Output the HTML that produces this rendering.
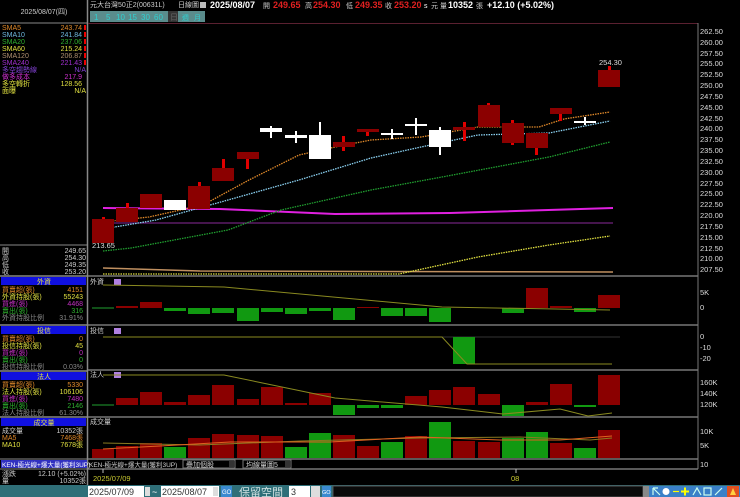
<!DOCTYPE html>
<html><head><meta charset="utf-8"><style>
html,body{margin:0;padding:0;background:#000;width:740px;height:497px;overflow:hidden}
svg{display:block}
text{font-family:"Liberation Sans","Noto Sans CJK TC",sans-serif}
.s{font-size:7px}
</style></head><body>
<svg width="740" height="497" viewBox="0 0 740 497" xmlns="http://www.w3.org/2000/svg">
<rect width="740" height="497" fill="#000"/>
<!-- left panel borders -->
<rect x="0" y="0" width="88" height="485" fill="#000"/>
<line x1="87.5" y1="0" x2="87.5" y2="485" stroke="#888" stroke-width="1.5"/>
<line x1="0" y1="23" x2="88" y2="23" stroke="#888"/>
<text x="44" y="14" class="s" fill="#ccc" text-anchor="middle">2025/08/07(四)</text>
<g class="s">
<text x="2" y="30" fill="#e0892a">SMA5</text><text x="82" y="30" fill="#e0892a" text-anchor="end">243.74</text>
<text x="2" y="37" fill="#6fb8e0">SMA10</text><text x="82" y="37" fill="#6fb8e0" text-anchor="end">241.84</text>
<text x="2" y="44" fill="#2fb02f">SMA20</text><text x="82" y="44" fill="#2fb02f" text-anchor="end">237.06</text>
<text x="2" y="51" fill="#e0e040">SMA60</text><text x="82" y="51" fill="#e0e040" text-anchor="end">215.24</text>
<text x="2" y="58" fill="#b09070">SMA120</text><text x="82" y="58" fill="#b09070" text-anchor="end">206.87</text>
<text x="2" y="65" fill="#a030d0">SMA240</text><text x="82" y="65" fill="#a030d0" text-anchor="end">221.43</text>
<text x="2" y="72" fill="#8040d0">多空趨勢線</text><text x="86" y="72" fill="#8040d0" text-anchor="end">N/A</text>
<text x="2" y="79" fill="#d030d0">做多成本</text><text x="82" y="79" fill="#d030d0" text-anchor="end">217.9</text>
<text x="2" y="86" fill="#e0e040">多空轉折</text><text x="82" y="86" fill="#e0e040" text-anchor="end">128.56</text>
<text x="2" y="93" fill="#e0e040">面曝</text><text x="86" y="93" fill="#e0e040" text-anchor="end">N/A</text>
</g>
<g fill="#e00">
<rect x="84" y="25" width="2" height="5"/><rect x="84" y="32" width="2" height="5"/><rect x="84" y="39" width="2" height="5"/><rect x="84" y="46" width="2" height="5"/><rect x="84" y="53" width="2" height="5"/><rect x="84" y="60" width="2" height="5"/>
</g>
<line x1="0" y1="245" x2="88" y2="245" stroke="#888"/>
<g class="s" fill="#ccc">
<text x="2" y="253">開</text><text x="86" y="253" text-anchor="end">249.65</text>
<text x="2" y="260">高</text><text x="86" y="260" text-anchor="end">254.30</text>
<text x="2" y="267">低</text><text x="86" y="267" text-anchor="end">249.35</text>
<text x="2" y="274">收</text><text x="86" y="274" text-anchor="end">253.20</text>
</g>
<!-- sections -->
<g class="s">
<line x1="0" y1="276" x2="88" y2="276" stroke="#888" stroke-width="1.5"/>
<rect x="1" y="277" width="85" height="8" fill="#1010e0"/><text x="44" y="284" fill="#e0e040" text-anchor="middle">外資</text>
<text x="2" y="292" fill="#e0892a">買賣超(張)</text><text x="83" y="292" fill="#e0892a" text-anchor="end">4151</text>
<text x="2" y="299" fill="#e0e040">外資持股(張)</text><text x="83" y="299" fill="#e0e040" text-anchor="end">55243</text>
<text x="2" y="306" fill="#c030c0">買進(張)</text><text x="83" y="306" fill="#c030c0" text-anchor="end">4468</text>
<text x="2" y="313" fill="#2fb02f">賣出(張)</text><text x="83" y="313" fill="#2fb02f" text-anchor="end">316</text>
<text x="2" y="320" fill="#888">外資持股比例</text><text x="83" y="320" fill="#888" text-anchor="end">31.91%</text>
<line x1="0" y1="325" x2="88" y2="325" stroke="#888" stroke-width="1.5"/>
<rect x="1" y="326" width="85" height="8" fill="#1010e0"/><text x="44" y="333" fill="#e0e040" text-anchor="middle">投信</text>
<text x="2" y="341" fill="#e0892a">買賣超(張)</text><text x="83" y="341" fill="#e0892a" text-anchor="end">0</text>
<text x="2" y="348" fill="#e0e040">投信持股(張)</text><text x="83" y="348" fill="#e0e040" text-anchor="end">45</text>
<text x="2" y="355" fill="#c030c0">買進(張)</text><text x="83" y="355" fill="#c030c0" text-anchor="end">0</text>
<text x="2" y="362" fill="#2fb02f">賣出(張)</text><text x="83" y="362" fill="#2fb02f" text-anchor="end">0</text>
<text x="2" y="369" fill="#888">投信持股比例</text><text x="83" y="369" fill="#888" text-anchor="end">0.03%</text>
<line x1="0" y1="371" x2="88" y2="371" stroke="#888" stroke-width="1.5"/>
<rect x="1" y="372" width="85" height="8" fill="#1010e0"/><text x="44" y="379" fill="#e0e040" text-anchor="middle">法人</text>
<text x="2" y="387" fill="#e0892a">買賣超(張)</text><text x="83" y="387" fill="#e0892a" text-anchor="end">5330</text>
<text x="2" y="394" fill="#e0e040">法人持股(張)</text><text x="83" y="394" fill="#e0e040" text-anchor="end">106106</text>
<text x="2" y="401" fill="#c030c0">買進(張)</text><text x="83" y="401" fill="#c030c0" text-anchor="end">7480</text>
<text x="2" y="408" fill="#2fb02f">賣出(張)</text><text x="83" y="408" fill="#2fb02f" text-anchor="end">2146</text>
<text x="2" y="415" fill="#888">法人持股比例</text><text x="83" y="415" fill="#888" text-anchor="end">61.30%</text>
<line x1="0" y1="417" x2="88" y2="417" stroke="#888" stroke-width="1.5"/>
<rect x="1" y="418" width="85" height="8" fill="#1010e0"/><text x="44" y="425" fill="#e0e040" text-anchor="middle">成交量</text>
<text x="2" y="433" fill="#ccc">成交量</text><text x="83" y="433" fill="#ccc" text-anchor="end">10352張</text>
<text x="2" y="440" fill="#e0892a">MA5</text><text x="83" y="440" fill="#e0892a" text-anchor="end">7468張</text>
<text x="2" y="447" fill="#e0e040">MA10</text><text x="83" y="447" fill="#e0e040" text-anchor="end">7678張</text>
<line x1="0" y1="459" x2="88" y2="459" stroke="#888"/>
<rect x="1" y="460" width="86" height="8" fill="#3030c0"/><text x="2" y="467" fill="#fff" font-size="6.5">KEN-極光線+爆大量(獲利3UP)</text>
<line x1="0" y1="469" x2="88" y2="469" stroke="#888"/>
<text x="2" y="476" fill="#ccc">漲跌</text><text x="86" y="476" fill="#ccc" text-anchor="end">12.10 (+5.02%)</text>
<text x="2" y="483" fill="#ccc">量</text><text x="86" y="483" fill="#ccc" text-anchor="end">10352張</text>
</g>
<!-- header -->
<g class="s">
<text x="90" y="7" fill="#ccc">元大台灣50正2(00631L)</text>
<text x="178" y="7" fill="#ccc">日線圖</text>
<rect x="200" y="2" width="6" height="6" fill="#bbb"/>
</g>
<text x="210" y="8" font-size="9" font-weight="bold" fill="#fff">2025/08/07</text>
<text x="263" y="8" font-size="7" fill="#ccc">開</text><text x="273" y="8" font-size="9" font-weight="bold" fill="#e02020">249.65</text>
<text x="305" y="8" font-size="7" fill="#ccc">高</text><text x="313" y="8" font-size="9" font-weight="bold" fill="#e02020">254.30</text>
<text x="346" y="8" font-size="7" fill="#ccc">低</text><text x="355" y="8" font-size="9" font-weight="bold" fill="#e02020">249.35</text>
<text x="385" y="8" font-size="7" fill="#ccc">收</text><text x="394" y="8" font-size="9" font-weight="bold" fill="#e02020">253.20</text>
<text x="424" y="8" font-size="7" fill="#fff">s</text><text x="431" y="8" font-size="7" fill="#ccc">元 量</text>
<text x="448" y="8" font-size="9" font-weight="bold" fill="#fff">10352</text><text x="476" y="8" font-size="7" fill="#ccc">張</text>
<text x="487" y="8" font-size="9" font-weight="bold" fill="#fff">+12.10 (+5.02%)</text>
<!-- buttons -->
<g font-size="8" fill="#30d0d0">
<rect x="90" y="11" width="115" height="11" fill="#5a8c8c"/>
<rect x="168" y="11" width="10" height="11" fill="#333"/>
<text x="94" y="20">1</text><text x="106" y="20">5</text><text x="116" y="20">10</text><text x="128" y="20">15</text><text x="141" y="20">30</text><text x="154" y="20">60</text>
<text x="170" y="20" fill="#666">日</text><text x="182" y="20" font-size="7">週</text><text x="194" y="20" font-size="7">月</text>
</g>
<!-- chart frame -->
<line x1="88" y1="23.5" x2="698" y2="23.5" stroke="#5a2030"/>
<line x1="698" y1="23" x2="698" y2="469" stroke="#777"/>
<g stroke="#777" stroke-width="1.5">
<line x1="88" y1="276" x2="698" y2="276"/><line x1="88" y1="325" x2="698" y2="325"/>
<line x1="88" y1="370" x2="698" y2="370"/><line x1="88" y1="417" x2="698" y2="417"/>
<line x1="88" y1="459" x2="698" y2="459"/><line x1="88" y1="469" x2="698" y2="469"/>
</g>
<!-- price axis -->
<g font-size="7.5" fill="#ddd">
<text x="700" y="34">262.50</text><text x="700" y="45">260.00</text><text x="700" y="56">257.50</text><text x="700" y="66">255.00</text><text x="700" y="77">252.50</text><text x="700" y="88">250.00</text><text x="700" y="99">247.50</text><text x="700" y="110">245.00</text><text x="700" y="121">242.50</text><text x="700" y="131">240.00</text><text x="700" y="142">237.50</text><text x="700" y="153">235.00</text><text x="700" y="164">232.50</text><text x="700" y="175">230.00</text><text x="700" y="186">227.50</text><text x="700" y="196">225.00</text><text x="700" y="207">222.50</text><text x="700" y="218">220.00</text><text x="700" y="229">217.50</text><text x="700" y="240">215.00</text><text x="700" y="251">212.50</text><text x="700" y="261">210.00</text><text x="700" y="272">207.50</text>
<text x="700" y="295">5K</text><text x="700" y="310">0</text>
<text x="700" y="339">0</text><text x="700" y="350">-10</text><text x="700" y="361">-20</text>
<text x="700" y="385">160K</text><text x="700" y="396">140K</text><text x="700" y="407">120K</text>
<text x="700" y="434">10K</text><text x="700" y="448">5K</text>
<text x="700" y="467">10</text>
</g>
<!-- MA lines -->
<polyline points="103,223 613,223" stroke="#8a2a9a" stroke-width="1" fill="none"/>
<polyline points="103,208 220,209 335,214 450,213 613,208" stroke="#e020e0" stroke-width="2" fill="none"/>
<polyline points="103,268 200,271 613,272" stroke="#c09060" stroke-width="1.5" fill="none"/>
<polyline points="103,274 399,274 478,257 549,245 610,236" stroke="#e0e040" stroke-width="1.3" stroke-dasharray="1.5,1" fill="none"/>
<polyline points="103,251 131,248 228,230 281,210 371,190 442,177 549,157 610,142" stroke="#20a030" stroke-width="1.3" stroke-dasharray="1.5,1" fill="none"/>
<polyline points="103,229 156,220 228,200 299,180 371,158 421,147 478,135 549,133 610,121" stroke="#8ad0f0" stroke-width="1.3" stroke-dasharray="1.5,1" fill="none"/>
<polyline points="103,222 149,217 203,205 249,180 299,155 335,147 371,140 421,137 478,127 539,127 564,119 610,112" stroke="#e0892a" stroke-width="1.3" stroke-dasharray="1.5,1" fill="none"/>
<!-- candles: red -->
<g fill="#e00000">
<rect x="102" y="217" width="3" height="26"/><rect x="126" y="203" width="3" height="19"/><rect x="198" y="182" width="3" height="27"/><rect x="222" y="159" width="3" height="22"/><rect x="246" y="152" width="3" height="17"/><rect x="342" y="136" width="3" height="15"/><rect x="366" y="129" width="3" height="7"/><rect x="463" y="122" width="3" height="19"/><rect x="487" y="103" width="3" height="24"/><rect x="511" y="120" width="3" height="25"/><rect x="535" y="133" width="3" height="22"/><rect x="559" y="108" width="3" height="13"/><rect x="608" y="66" width="3" height="21"/>
</g>
<g fill="#8b0000">
<rect x="92" y="219" width="22" height="24"/><rect x="116" y="208" width="22" height="14"/><rect x="140" y="194" width="22" height="14"/><rect x="188" y="186" width="22" height="23"/><rect x="212" y="168" width="22" height="13"/><rect x="237" y="152" width="22" height="7"/><rect x="333" y="142" width="22" height="5"/><rect x="357" y="129" width="22" height="3"/><rect x="453" y="127" width="22" height="3"/><rect x="478" y="105" width="22" height="22"/><rect x="502" y="123" width="22" height="20"/><rect x="526" y="133" width="22" height="15"/><rect x="550" y="108" width="22" height="6"/><rect x="598" y="70" width="22" height="17"/>
</g>
<!-- white candles -->
<g fill="#fff">
<rect x="164" y="200" width="22" height="10"/>
<rect x="260" y="128" width="22" height="4"/><rect x="270" y="126" width="2" height="12"/>
<rect x="285" y="135" width="22" height="3"/><rect x="295" y="131" width="2" height="12"/>
<rect x="309" y="135" width="22" height="24"/><rect x="319" y="122" width="2" height="13"/>
<rect x="381" y="133" width="22" height="2"/><rect x="391" y="129" width="2" height="10"/>
<rect x="405" y="124" width="22" height="2"/><rect x="415" y="118" width="2" height="17"/>
<rect x="429" y="130" width="22" height="17"/><rect x="439" y="127" width="2" height="28"/>
<rect x="574" y="121" width="22" height="2"/><rect x="584" y="117" width="2" height="8"/>
</g>
<text x="92" y="248" font-size="7.5" fill="#ddd">213.65</text>
<text x="599" y="65" font-size="7.5" fill="#ddd">254.30</text>
<!-- pane labels -->
<g class="s" fill="#ccc">
<text x="90" y="284">外資</text><rect x="114" y="279" width="7" height="6" fill="#b080e0"/>
<text x="90" y="333">投信</text><rect x="114" y="328" width="7" height="6" fill="#b080e0"/>
<text x="90" y="377">法人</text><rect x="114" y="372" width="7" height="6" fill="#b080e0"/>
<text x="90" y="424">成交量</text>
</g>
<!-- 外資 -->
<line x1="92" y1="308" x2="114" y2="308" stroke="#20a030"/>
<g fill="#8b0000">
<rect x="116" y="306" width="22" height="2"/><rect x="140" y="302" width="22" height="6"/><rect x="357" y="307" width="22" height="1"/><rect x="526" y="288" width="22" height="20"/><rect x="550" y="306" width="22" height="2"/><rect x="598" y="295" width="22" height="13"/>
</g>
<g fill="#119911">
<rect x="164" y="308" width="22" height="3"/><rect x="188" y="308" width="22" height="6"/><rect x="212" y="308" width="22" height="5"/><rect x="237" y="308" width="22" height="13"/><rect x="261" y="308" width="22" height="4"/><rect x="285" y="308" width="22" height="6"/><rect x="309" y="308" width="22" height="3"/><rect x="333" y="308" width="22" height="12"/><rect x="381" y="308" width="22" height="8"/><rect x="405" y="308" width="22" height="8"/><rect x="429" y="308" width="22" height="14"/><rect x="502" y="308" width="22" height="5"/><rect x="574" y="308" width="22" height="4"/>
</g>
<polyline points="103,285 224,287 442,307 610,310" stroke="#8a8a20" fill="none"/>
<!-- 投信 -->
<polyline points="103,337 620,337" stroke="#333" fill="none"/>
<rect x="453" y="337" width="22" height="27" fill="#119911"/>
<polyline points="103,337 442,337 467,364 612,364" stroke="#8a8a20" fill="none"/>
<!-- 法人 -->
<line x1="92" y1="405" x2="114" y2="405" stroke="#20a030"/>
<g fill="#8b0000">
<rect x="116" y="398" width="22" height="7"/><rect x="140" y="392" width="22" height="13"/><rect x="164" y="402" width="22" height="3"/><rect x="188" y="395" width="22" height="10"/><rect x="212" y="385" width="22" height="20"/><rect x="237" y="399" width="22" height="6"/><rect x="261" y="387" width="22" height="18"/><rect x="285" y="403" width="22" height="2"/><rect x="309" y="393" width="22" height="12"/><rect x="405" y="396" width="22" height="9"/><rect x="429" y="390" width="22" height="15"/><rect x="453" y="387" width="22" height="18"/><rect x="478" y="394" width="22" height="11"/><rect x="526" y="402" width="22" height="3"/><rect x="550" y="384" width="22" height="21"/><rect x="598" y="375" width="22" height="30"/>
</g>
<g fill="#119911">
<rect x="333" y="405" width="22" height="10"/><rect x="357" y="405" width="22" height="3"/><rect x="381" y="405" width="22" height="3"/><rect x="502" y="405" width="22" height="11"/><rect x="574" y="405" width="22" height="2"/>
</g>
<polyline points="103,375 224,375 335,398 442,407 503,414 560,409 588,416 612,413" stroke="#8a8a20" fill="none"/>
<!-- 成交量 -->
<g fill="#8b0000">
<rect x="92" y="449" width="22" height="9"/><rect x="116" y="446" width="22" height="12"/><rect x="140" y="443" width="22" height="15"/><rect x="188" y="438" width="22" height="20"/><rect x="212" y="434" width="22" height="24"/><rect x="237" y="435" width="22" height="23"/><rect x="261" y="436" width="22" height="22"/><rect x="333" y="435" width="22" height="23"/><rect x="357" y="446" width="22" height="12"/><rect x="405" y="436" width="22" height="22"/><rect x="453" y="441" width="22" height="17"/><rect x="478" y="442" width="22" height="16"/><rect x="550" y="443" width="22" height="15"/><rect x="598" y="430" width="22" height="28"/>
</g>
<g fill="#119911">
<rect x="164" y="447" width="22" height="11"/><rect x="285" y="447" width="22" height="11"/><rect x="309" y="433" width="22" height="25"/><rect x="381" y="442" width="22" height="16"/><rect x="429" y="422" width="22" height="36"/><rect x="502" y="438" width="22" height="20"/><rect x="526" y="432" width="22" height="26"/><rect x="574" y="448" width="22" height="10"/>
</g>
<polyline points="103,443 200,445 300,441 420,438 520,437 590,440 612,438" stroke="#8a7a20" fill="none"/>
<polyline points="103,449 160,446 230,442 330,442 420,437 500,440 560,440 612,436" stroke="#e06020" fill="none"/>
<!-- dropdown row -->
<g class="s" fill="#ccc">
<text x="89" y="467" font-size="6.5">KEN-極光線+爆大量(獲利3UP)</text>
<rect x="183" y="460" width="52" height="8" fill="none" stroke="#777"/><text x="186" y="467">疊加個股</text><rect x="229" y="461" width="5" height="6" fill="#333"/>
<rect x="243" y="460" width="48" height="8" fill="none" stroke="#777"/><text x="246" y="467">均線量圖5</text><rect x="285" y="461" width="5" height="6" fill="#333"/>
</g>
<!-- date axis -->
<line x1="103" y1="469" x2="103" y2="473" stroke="#bbb"/>
<line x1="516" y1="469" x2="516" y2="473" stroke="#bbb"/>
<text x="93" y="481" font-size="7.5" fill="#c8c830">2025/07/09</text>
<text x="511" y="481" font-size="7.5" fill="#c8c830">08</text>
<!-- bottom bar -->
<rect x="0" y="485" width="740" height="12" fill="#2f6f78"/>
<rect x="88" y="486" width="56" height="11" fill="#fff"/><text x="89" y="495" font-size="9" fill="#333" font-family="Liberation Serif">2025/07/09</text>
<rect x="145" y="487" width="5" height="9" fill="#ddd"/>
<text x="152" y="495" font-size="9" fill="#fff">~</text>
<rect x="161" y="486" width="58" height="11" fill="#fff"/><text x="162" y="495" font-size="9" fill="#333">2025/08/07</text>
<rect x="213" y="487" width="5" height="9" fill="#ddd"/>
<rect x="221" y="486" width="11" height="11" fill="#3a8ad0"/><text x="222" y="494" font-size="6" fill="#fff">GO</text>
<text x="239" y="496" font-size="11" fill="#cfe0e0">保留空間</text>
<rect x="289" y="486" width="21" height="11" fill="#fff"/><text x="291" y="495" font-size="9" fill="#333">3</text>
<rect x="311" y="486" width="9" height="11" fill="#ddd"/>
<rect x="322" y="486" width="9" height="11" fill="#3a8ad0"/><text x="322" y="494" font-size="5.5" fill="#fff">GO</text>
<rect x="333" y="486" width="310" height="11" fill="#0a0a0a" stroke="#555"/>
<rect x="643" y="486" width="6" height="11" fill="#888"/>
<rect x="649" y="486" width="91" height="11" fill="#3a80c8"/>
<g stroke="#cfe" stroke-width="1.2" fill="none">
<path d="M653 488 L653 495 M653 488 L658 488 M653 488 L660 495"/>
<circle cx="666" cy="491.5" r="3.5" fill="#fff" stroke="none"/>
<path d="M673 491.5 L679 491.5" stroke="#ff0"/>
<path d="M681 491.5 L689 491.5 M685 487.5 L685 495.5" stroke="#ff0" stroke-width="2"/>
<path d="M693 495 L697 488 L701 495"/>
<rect x="704" y="488" width="7" height="7"/>
<path d="M715 495 L722 488"/>
</g>
<rect x="727" y="486" width="12" height="11" fill="#e05020"/>
<path d="M730 495 L733 488 L736 495 Z" fill="#ffd040"/>
</svg>
</body></html>
